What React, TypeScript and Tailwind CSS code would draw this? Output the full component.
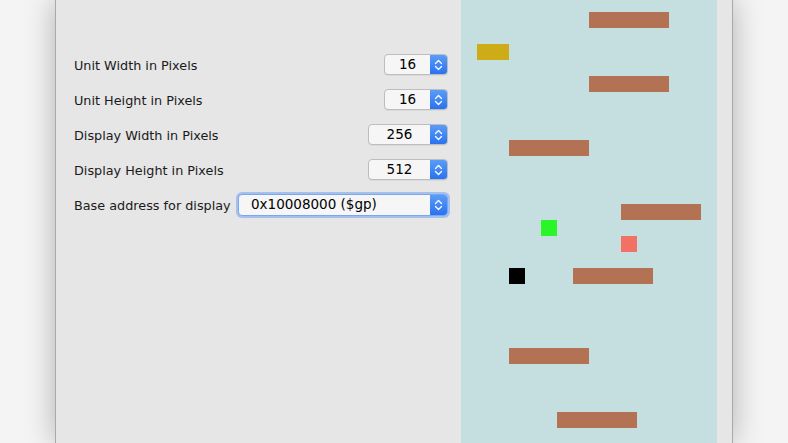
import React from "react";

type Block = { c: number; r: number; w: number; color: string };

const BROWN = "#b37253";
const blocks: Block[] = [
  { c: 8, r: 1, w: 5, color: BROWN },
  { c: 1, r: 3, w: 2, color: "#cdac17" },
  { c: 8, r: 5, w: 5, color: BROWN },
  { c: 3, r: 9, w: 5, color: BROWN },
  { c: 10, r: 13, w: 5, color: BROWN },
  { c: 5, r: 14, w: 1, color: "#29f529" },
  { c: 10, r: 15, w: 1, color: "#f27064" },
  { c: 3, r: 17, w: 1, color: "#000000" },
  { c: 7, r: 17, w: 5, color: BROWN },
  { c: 3, r: 22, w: 5, color: BROWN },
  { c: 6, r: 26, w: 5, color: BROWN },
];

function Arrows() {
  return (
    <svg width="9" height="12" viewBox="0 0 9 12" fill="none">
      <path d="M1.5 4.5 L4.5 1.5 L7.5 4.5" stroke="white" strokeWidth="1.3" strokeLinecap="round" strokeLinejoin="round" />
      <path d="M1.5 7.5 L4.5 10.5 L7.5 7.5" stroke="white" strokeWidth="1.3" strokeLinecap="round" strokeLinejoin="round" />
    </svg>
  );
}

function Spinner({ value, wide }: { value: string; wide?: boolean }) {
  return (
    <div
      className={`flex h-[21px] ${wide ? "w-[80px]" : "w-[64px]"} rounded-[4px] border border-[#bdbdbd] bg-[#f6f6f6] shadow-[0_1px_0_rgba(0,0,0,0.05)] overflow-hidden`}
    >
      <div className="flex flex-1 items-center justify-center text-[13.5px] text-black leading-none">
        {value}
      </div>
      <div className="flex w-[17px] items-center justify-center bg-gradient-to-b from-[#5a9cf8] to-[#2a72f0]">
        <Arrows />
      </div>
    </div>
  );
}

function Row({ label, children }: { label: string; children: React.ReactNode }) {
  return (
    <div className="flex h-[35px] items-center justify-between">
      <span className="pt-[2px] text-[12.8px] text-[#1a1a1a]">{label}</span>
      {children}
    </div>
  );
}

export default function App() {
  return (
    <div
      className="h-[443px] w-full overflow-hidden bg-[#f4f4f4]"
      style={{ fontFamily: '"DejaVu Sans", "Noto Sans", sans-serif' }}
    >
      <div className="mx-auto flex h-full w-[678px] border-x border-[#a9a9a9] bg-[#e6e6e6] shadow-[0_0_28px_rgba(0,0,0,0.28)]">
        <div className="w-[405px] pl-[18px] pr-[13px] pt-[47px]">
          <Row label="Unit Width in Pixels">
            <Spinner value="16" />
          </Row>
          <Row label="Unit Height in Pixels">
            <Spinner value="16" />
          </Row>
          <Row label="Display Width in Pixels">
            <Spinner value="256" wide />
          </Row>
          <Row label="Display Height in Pixels">
            <Spinner value="512" wide />
          </Row>
          <Row label="Base address for display">
            <div className="flex h-[22px] w-[210px] rounded-[4px] border border-[#7aa7ee] bg-[#f6f6f6] shadow-[0_0_0_2px_rgba(110,160,240,0.55)] overflow-hidden">
              <div className="flex flex-1 items-center pl-[12px] text-[13.5px] text-black leading-none">
                0x10008000 ($gp)
              </div>
              <div className="flex w-[17px] items-center justify-center bg-gradient-to-b from-[#5a9cf8] to-[#2a72f0]">
                <Arrows />
              </div>
            </div>
          </Row>
        </div>
        <div className="relative h-full w-[256px] bg-[#c5dfe0]">
          {blocks.map((b, i) => (
            <div
              key={i}
              className="absolute h-[16px]"
              style={{ left: b.c * 16, top: b.r * 16 - 4, width: b.w * 16, background: b.color }}
            />
          ))}
        </div>
      </div>
    </div>
  );
}
